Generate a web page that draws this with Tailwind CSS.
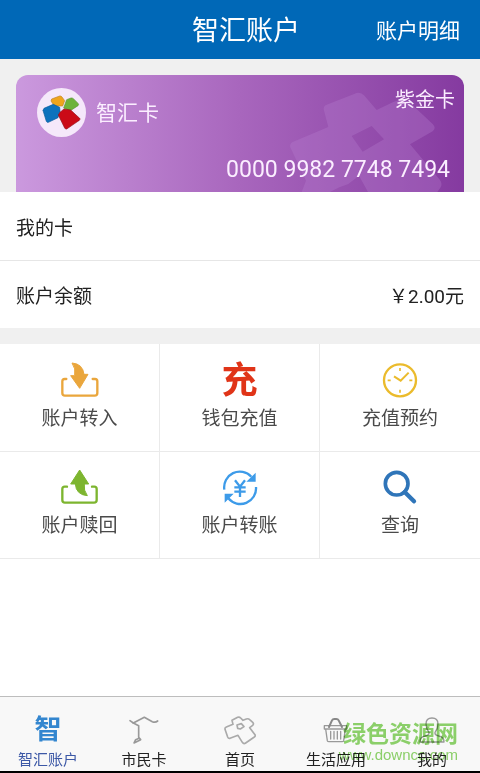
<!DOCTYPE html>
<html lang="zh-CN">
<head>
<meta charset="utf-8">
<meta name="viewport" content="width=device-width, initial-scale=1">
<title>智汇账户</title>
<script src="https://cdn.jsdelivr.net/npm/@tailwindcss/browser@4"></script>
</head>
<body class="flex min-h-screen flex-col bg-white font-[Roboto,'Noto_Sans_CJK_SC',sans-serif] text-[#222]">

<header class="grid h-[59px] grid-cols-3 items-center bg-[#0068b7] text-white">
  <h1 class="col-start-2 pt-0.5 pl-3 text-center text-[27px] leading-8 whitespace-nowrap">智汇账户</h1>
  <a href="#detail" class="pt-0.5 pr-5 text-right text-[21px] leading-8 whitespace-nowrap">账户明细</a>
</header>

<main class="grow">
  <section class="bg-[#f0f0f0] px-4 pt-4">
    <div class="relative flex h-[117px] flex-col justify-between overflow-hidden rounded-t-xl bg-linear-to-r from-[#cb99de] via-[#a866bd] to-[#853aa0] text-[#fbeeff]">
      <svg class="absolute top-0 right-0 h-full" viewBox="840 225 552 351" aria-hidden="true">
        <path fill="#b87fd0" fill-opacity=".32" fill-rule="evenodd" d="M980 314 L1070 279 Q1082 275 1092 286 L1130 330 L1180 306 Q1210 292 1225 304 L1298 372 Q1310 384 1298 394 L1230 433 L1320 540 Q1328 552 1322 562 L1312 576 H1104 L1077 527 L1045 552 L1018 562 L990 576 H905 L918 542 L871 442 Q868 432 878 426 L985 381 L971 328 Q970 318 980 314Z M1055 408 L1115 378 L1152 418 L1088 455Z"/>
      </svg>
      <div class="relative flex items-start justify-between pt-[9px] pr-[9px] pl-[21px]">
        <div class="flex items-center gap-[10px] pt-1">
          <svg class="size-[49px]" viewBox="111 84 147 147" aria-hidden="true">
            <circle cx="184.500" cy="157.500" r="73.500" fill="#f5e8fa"/>
            <path fill="#efa51c" stroke="#bd8527" stroke-width="2" d="M155 117 L179 108 Q183 107 186 111 L194 122 L188 138 L163 138 L153 123Z"/>
            <path fill="#6db33a" stroke="#5a9634" stroke-width="2" d="M200 119 L213 114 Q217 113 221 117 L235 131 Q237 134 234 137 L211 152 L191 144Z"/>
            <path fill="#0d72bd" stroke="#075a98" stroke-width="2" d="M132 145 L160 133 L179 142 L180 154 L174 173 L145 187 Q141 188 139 184 L129 151Z"/>
            <path fill="#cb0a17" stroke="#93101a" stroke-width="2" d="M180 157 L192 147 L212 150 L239 175 Q241 178 238 181 L200 207 Q196 208 194 204 L175 165Z"/>
          </svg>
          <span class="text-[21px] leading-8">智汇卡</span>
        </div>
        <span class="text-[20px] leading-8">紫金卡</span>
      </div>
      <p class="relative pr-[14px] pb-2 text-right text-[23px] leading-7">0000 9982 7748 7494</p>
    </div>
  </section>

  <dl class="text-[19px] leading-7">
    <div class="flex items-center border-b border-[#e6e6e6] px-4 pt-[23px] pb-[17px]">
      <dt>我的卡</dt>
    </div>
    <div class="flex items-center justify-between px-4 pt-[22px] pb-[17px]">
      <dt>账户余额</dt>
      <dd>￥2.00元</dd>
    </div>
  </dl>

  <div class="h-4 bg-[#f0f0f0]"></div>

  <nav aria-label="账户功能" class="grid grid-cols-3 text-[19px] leading-9 text-[#4a4a4a]">
    <a href="#in" class="flex flex-col items-center border-r border-b border-[#eaeaea] pt-[17px] pb-[14px]">
      <svg class="size-10" viewBox="59 30 120 120" fill="none" aria-hidden="true">
        <path d="M78 84 H73 Q66 84 66 91 V126 Q66 134 74 134 H163 Q171 134 171 126 V91 Q171 84 164 84 H157" stroke="#eaa63c" stroke-width="7" stroke-linecap="round"/>
        <path d="M95 36 Q127 38 131 70 H143 L118 112 L91 74 H103 Q107 52 95 36Z" fill="#eaa63c" stroke="#eaa63c" stroke-width="3" stroke-linejoin="round"/>
      </svg>
      <span>账户转入</span>
    </a>
    <a href="#topup" class="flex flex-col items-center border-r border-b border-[#eaeaea] pt-[17px] pb-[14px]">
      <span class="flex size-10 items-center justify-center text-[36px] leading-10 font-bold text-[#e03418]" aria-hidden="true">充</span>
      <span>钱包充值</span>
    </a>
    <a href="#reserve" class="flex flex-col items-center border-b border-[#eaeaea] pt-[17px] pb-[14px]">
      <svg class="size-10" viewBox="75 30 120 120" fill="none" stroke="#ebbb2c" aria-hidden="true">
        <circle cx="135" cy="88" r="48" stroke-width="7"/>
        <path d="M135 51 V60 M135 116 V125 M98 88 H107 M163 88 H172" stroke-width="5"/>
        <path d="M117 76 L137 89 L161 65" stroke-width="6"/>
      </svg>
      <span>充值预约</span>
    </a>
    <a href="#redeem" class="flex flex-col items-center border-r border-b border-[#eaeaea] pt-4 pb-[14px]">
      <svg class="size-10" viewBox="59 36 120 120" fill="none" aria-hidden="true">
        <path d="M80 92 H73 Q66 92 66 99 V132 Q66 140 74 140 H161 Q169 140 169 132 V99 Q169 92 162 92 H155" stroke="#7db52f" stroke-width="7" stroke-linecap="round"/>
        <path d="M118 42 L145 84 H132 Q129 103 141 119 Q107 116 105 84 H91Z" fill="#7db52f" stroke="#7db52f" stroke-width="3" stroke-linejoin="round"/>
      </svg>
      <span>账户赎回</span>
    </a>
    <a href="#transfer" class="flex flex-col items-center border-r border-b border-[#eaeaea] pt-4 pb-[14px]">
      <svg class="size-10" viewBox="74 36 120 120" fill="none" stroke="#3d9be9" aria-hidden="true">
        <path d="M87 101 A47 47 0 0 1 168 62 M182 93 A47 47 0 0 1 99 127" stroke-width="7"/>
        <path d="M181 50 V77 H153Z M88 140 V113 H115Z" fill="#3d9be9" stroke="none"/>
        <path d="M119 73 L134 92 L149 73 M134 92 V123 M117 94 H151 M117 107 H151" stroke-width="7"/>
      </svg>
      <span>账户转账</span>
    </a>
    <a href="#query" class="flex flex-col items-center border-b border-[#eaeaea] pt-4 pb-[14px]">
      <svg class="size-10" viewBox="75 36 120 120" fill="none" stroke="#2f75b9" aria-hidden="true">
        <circle cx="125" cy="83" r="34" stroke-width="11"/>
        <path d="M149 108 L177 136" stroke-width="13" stroke-linecap="round"/>
      </svg>
      <span>查询</span>
    </a>
  </nav>
</main>

<footer class="relative border-t border-b-2 border-t-[#bdbdbd] border-b-black bg-[#f8f8f8]">
  <nav aria-label="主导航" class="grid grid-cols-5 pt-[17px] text-[15px] leading-[22px] text-[#222]">
    <a href="#account" aria-current="page" class="flex flex-col items-center text-[#3c58a6]">
      <span class="flex size-8 items-center justify-center text-[27px] leading-8 font-bold text-[#3386cf]" aria-hidden="true">智</span>
      <span class="pt-[3px]">智汇账户</span>
    </a>
    <a href="#card" class="flex flex-col items-center">
      <svg class="size-8" viewBox="384 69 96 96" fill="none" stroke="#999" stroke-linecap="round" stroke-linejoin="round" aria-hidden="true">
        <path d="M390 89 L400 96 L433 79 L457 92 Q466 96 473 90" stroke-width="5"/>
        <path d="M400 96 L416 104 V139 L422 146 L402 156 L407 146 L414 143" stroke-width="5"/>
      </svg>
      <span class="pt-[3px]">市民卡</span>
    </a>
    <a href="#home" class="flex flex-col items-center">
      <svg class="size-8" viewBox="132 69 96 96" fill="none" stroke="#aaa" stroke-width="5" stroke-linejoin="round" aria-hidden="true">
        <path d="M156 88 L173 79 Q178 77 182 81 L189 88 L199 84 Q205 82 209 86 L219 95 Q222 99 218 103 L209 110 L225 131 Q227 135 223 138 L197 156 Q191 160 187 154 L174 133 L150 142 Q145 143 143 138 L135 115 Q134 110 139 108 L159 100Z"/>
        <path d="M171 102 L184 98 L192 107 L181 114 L173 112Z"/>
      </svg>
      <span class="pt-[3px]">首页</span>
    </a>
    <a href="#life" class="flex flex-col items-center">
      <svg class="size-8" viewBox="60 69 96 96" fill="none" stroke="#999" stroke-linecap="round" stroke-linejoin="round" aria-hidden="true">
        <path d="M73 104 H140 V114 H73Z M77 114 L82 149 Q83 152 87 152 H126 Q130 152 131 149 L136 114" stroke-width="4"/>
        <path d="M92 121 V144 M102 121 V144 M112 121 V144 M122 121 V144" stroke-width="4"/>
        <path d="M87 108 L96 88 Q98 84 103 84 H109 Q114 84 116 88 L126 108" stroke-width="6" stroke="#888"/>
      </svg>
      <span class="pt-[3px]">生活应用</span>
    </a>
    <a href="#mine" class="flex flex-col items-center">
      <svg class="size-8" viewBox="348 69 96 96" fill="none" stroke="#999" stroke-width="4" stroke-linejoin="round" aria-hidden="true">
        <path d="M387 124 Q378 113 378 99 Q378 81 396 81 Q414 81 414 99 Q414 113 405 124 Q404 131 411 133 L425 138 Q432 141 432 153 H360 Q360 141 367 138 L381 133 Q388 131 387 124Z"/>
      </svg>
      <span class="pt-[3px]">我的</span>
    </a>
  </nav>
  <div class="pointer-events-none absolute right-[22px] bottom-2 text-right text-[#8fd56c] mix-blend-multiply">
    <p class="text-[23px] leading-6 font-bold">绿色资源网</p>
    <p class="font-['Liberation_Sans',sans-serif] text-[15px] leading-4">www.downcc.com</p>
  </div>
</footer>

</body>
</html>
